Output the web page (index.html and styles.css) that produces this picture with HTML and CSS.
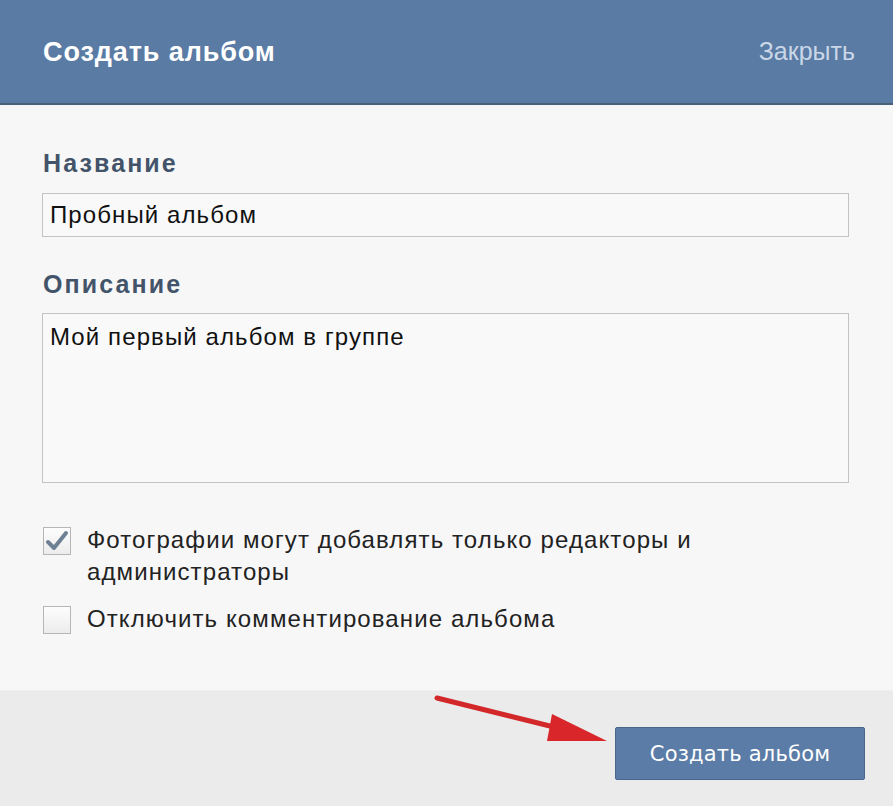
FILE: index.html
```html
<!DOCTYPE html>
<html lang="ru">
<head>
	<meta charset="UTF-8">
	<title>Создать альбом</title>
<link rel="stylesheet" href="styles.css">
</head>
<body>
<div class="dialog">
	<div class="head">
		<span class="title">Создать альбом</span>
		<a class="close">Закрыть</a>
	</div>
	<div class="body">
		<div class="label">Название</div>
		<div class="field">Пробный альбом</div>
		<div class="label">Описание</div>
		<div class="field area">Мой первый альбом в группе</div>
		<label class="check">
			<span class="box"><svg width="24" height="22" viewBox="0 0 24 22"><path d="M3 12 L9 18 L21 3" fill="none" stroke="#6e8093" stroke-width="4" stroke-linecap="round" stroke-linejoin="round"/></svg></span>
			<span class="text">Фотографии могут добавлять только редакторы и администраторы</span>
		</label>
		<label class="check">
			<span class="box"></span>
			<span class="text">Отключить комментирование альбома</span>
		</label>
	</div>
	<div class="foot">
		<button class="btn">Создать альбом</button>
		<!-- стрелка поверх подвала -->
		<svg class="arrow" width="200" height="70" viewBox="0 0 200 70"><line x1="5" y1="5" x2="130" y2="36" stroke="#d3282a" stroke-width="5" stroke-linecap="round"/><polygon points="120,21 115,48 175,48" fill="#d8262a"/></svg>
	</div>
</div>
</body>
</html>
```

FILE: styles.css
```css
body{margin:0;background:#fff;font-family:"Liberation Sans",Arial,sans-serif;}
.dialog{width:893px;height:806px;background:#f7f7f7;display:flex;flex-direction:column;}
.head{height:103px;background:#5a7ba3;border-bottom:2px solid #4b5f77;display:flex;align-items:center;justify-content:space-between;padding:0 38px 0 43px;}
.title{color:#fff;font-size:27px;font-weight:bold;letter-spacing:0.9px;margin-top:2px;}
.close{color:#c9d7e8;font-size:25px;}
.body{flex:1;padding:45px 44px 0 42px;}
.label{color:#43546a;font-size:25px;font-weight:bold;line-height:26px;margin-left:1px;letter-spacing:2.1px;}
.field{border:1px solid #c3c3c3;background:#f9f9f9;height:42px;line-height:42px;padding:0 7px;font-size:24px;letter-spacing:1.1px;color:#111;margin:17px 0 34px;}
.field.area{height:154px;line-height:30px;padding-top:8px;padding-bottom:6px;margin:16px 0 44px;}
.check{display:flex;align-items:flex-start;gap:16px;margin:0 0 18px 1px;}
.box{width:26px;height:26px;border:1px solid #b6b6b6;background:linear-gradient(#fdfdfd,#ececec);flex:none;display:flex;align-items:center;justify-content:center;}
.text{font-size:24px;letter-spacing:1.1px;line-height:32px;color:#222;margin-top:-3px;width:700px;}
.foot{height:116px;background:#ebebeb;border-top:1px solid #f0f0f0;position:relative;display:flex;justify-content:flex-end;align-items:flex-start;padding:36px 28px 0 0;box-sizing:border-box;}
.btn{width:250px;height:53px;background:#5b7ca6;border:1px solid #48668c;border-radius:2px;color:#fff;font-family:"DejaVu Sans",sans-serif;font-size:21px;letter-spacing:0.2px;}
.arrow{position:absolute;left:432px;top:2px;}
```
